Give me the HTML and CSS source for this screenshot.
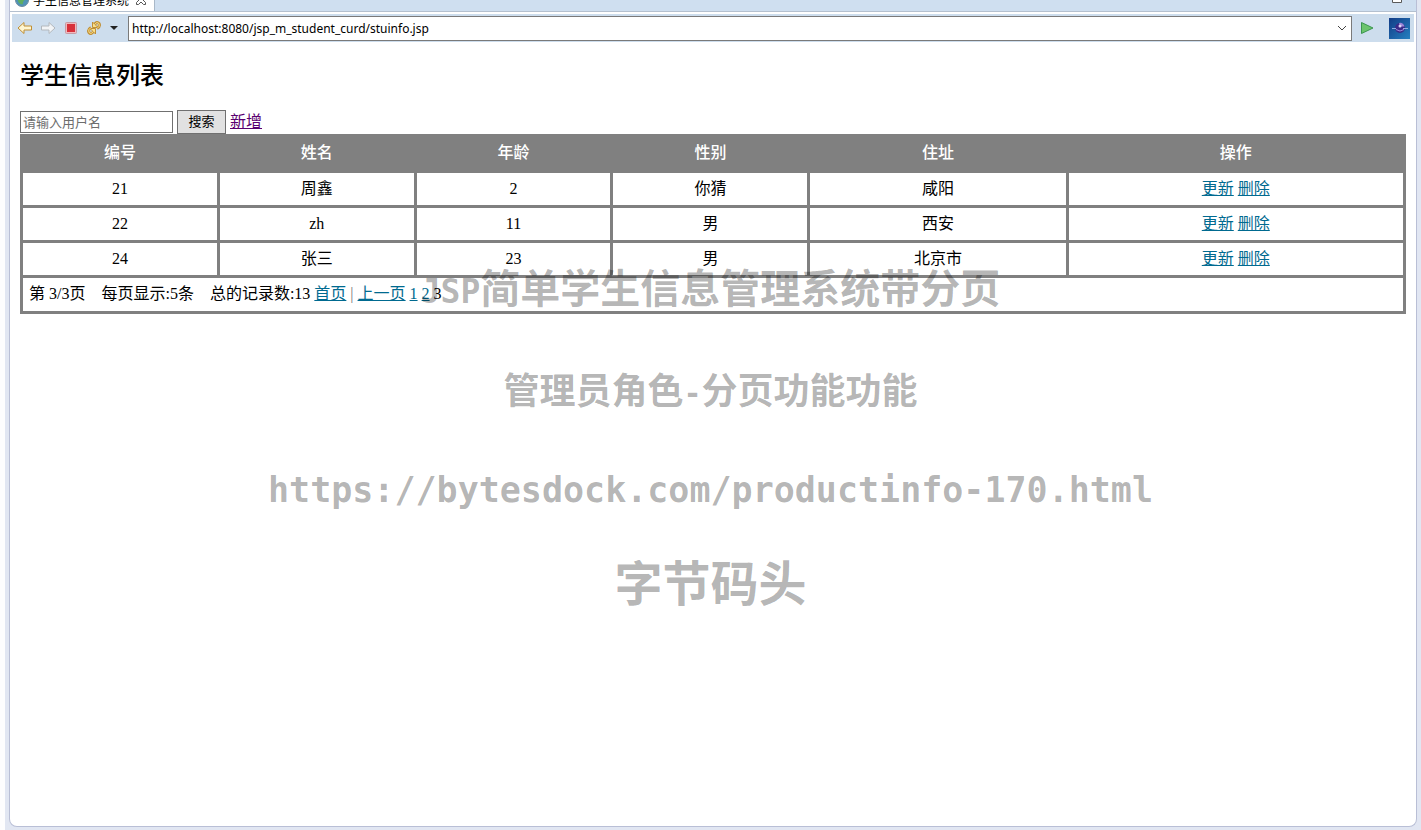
FILE: index.html
```
<!DOCTYPE html>
<html lang="zh-CN">
<head>
  <meta charset="UTF-8">
  <meta name="viewport" content="width=device-width, initial-scale=1.0">
  <title>学生信息管理系统</title>
  <link rel="stylesheet" href="styles.css">
</head>
<body>
  <div class="browser">
    <!-- Tab strip -->
    <div class="tab-strip">
      <div class="tab">
        <svg class="tab-globe" width="14" height="14" viewBox="0 0 14 14">
          <circle cx="7" cy="7" r="6.500" fill="#4f93b5" stroke="#6d8aa0"/>
          <path d="M3 5c3-3 6-2 7 0s-3 3-2 6c-3 1-6-2-5-6z" fill="#5fae62"/>
        </svg>
        <span>学生信息管理系统</span>
        <svg class="tab-close" width="12" height="12" viewBox="0 0 12 12">
          <path d="M1.500 1.500h2L6 4l2.500-2.500h2v2L8 6l2.500 2.500v2h-2L6 8l-2.500 2.500h-2v-2L4 6 1.500 3.500z" fill="#fff" stroke="#555"/>
        </svg>
      </div>
      <svg class="maximize" width="12" height="12" viewBox="0 0 12 12">
        <path d="M1.500 1.500h9v9h-9zM1.500 3.500h9" fill="#fff" stroke="#5a5a5a"/>
      </svg>
    </div>

    <!-- Address bar -->
    <form class="toolbar">
      <button type="button" class="tool" aria-label="后退">
        <svg width="16" height="16" viewBox="0 0 16 16">
          <path d="M1 8 7 2.500v3.500h7.500v4H7v3.500z" fill="#fff6d0" stroke="#c08f35" stroke-linejoin="round"/>
        </svg>
      </button>
      <button type="button" class="tool" aria-label="前进">
        <svg width="16" height="16" viewBox="0 0 16 16">
          <path d="M15 8 9 2.500v3.500H1.500v4H9v3.500z" fill="#f2f4f6" stroke="#b3b8bd" stroke-linejoin="round"/>
        </svg>
      </button>
      <button type="button" class="tool" aria-label="停止">
        <svg width="16" height="16" viewBox="0 0 16 16">
          <rect x="2.500" y="2.500" width="11" height="11" rx="1" fill="#f0b8bc" stroke="#c79aa4"/>
          <rect x="4" y="4" width="8" height="8" fill="#d8303a"/>
        </svg>
      </button>
      <button type="button" class="tool" aria-label="刷新">
        <svg width="16" height="16" viewBox="0 0 16 16">
          <g fill="none" stroke="#c08f35" stroke-width="3">
            <path d="M8.500 4.500Q11 1 13 3.500Q14.500 6.500 11 8.500"/>
            <path d="M7.500 11.500Q5 15 3 12.500Q1.500 9.500 5 7.500"/>
          </g>
          <path d="M6.500 2v5.500h5.500z" fill="#fbe08a" stroke="#c08f35" stroke-linejoin="round"/>
          <path d="M9.500 14V8.500H4z" fill="#fbe08a" stroke="#c08f35" stroke-linejoin="round"/>
          <g fill="none" stroke="#fbe08a">
            <path d="M8.500 4.500Q11 1 13 3.500Q14.500 6.500 11 8.500"/>
            <path d="M7.500 11.500Q5 15 3 12.500Q1.500 9.500 5 7.500"/>
          </g>
        </svg>
      </button>
      <button type="button" class="tool tool-menu" aria-label="更多">
        <svg width="8" height="4" viewBox="0 0 8 4"><path d="M0 0h8L4 4z" fill="#222"/></svg>
      </button>
      <div class="address">
        <input type="text" class="address-input" aria-label="地址" value="http://localhost:8080/jsp_m_student_curd/stuinfo.jsp">
        <svg width="10" height="6" viewBox="0 0 10 6"><path d="M1 1l4 4 4-4" fill="none" stroke="#444"/></svg>
      </div>
      <button type="button" class="tool go" aria-label="转到">
        <svg width="16" height="16" viewBox="0 0 16 16">
          <path d="M2.500 2.500 14 8 2.500 13.500z" fill="#6cc46c" stroke="#3b9650" stroke-linejoin="round"/>
        </svg>
      </button>
      <svg class="logo" width="21" height="21" viewBox="0 0 21 21">
        <defs>
          <linearGradient id="logoBg" x1="0" y1="0" x2="1" y2="1">
            <stop offset="0" stop-color="#123c86"/>
            <stop offset="1" stop-color="#2580c0"/>
          </linearGradient>
        </defs>
        <rect width="21" height="21" fill="url(#logoBg)"/>
        <circle cx="11" cy="10" r="5" fill="#3a2a88"/>
        <path d="M10 5q4-1 5.500 3.500H11z" fill="#9a86d8"/>
        <circle cx="11" cy="8" r="1.500" fill="#e0d4f6"/>
        <path d="M3 10.500h4M14 10.500h5" stroke="#8fa8e0"/>
        <path d="M7 11.500q4 3 8 0" fill="none" stroke="#9a8ad8"/>
      </svg>
    </form>

    <!-- Page -->
    <main class="page">
      <h2>学生信息列表</h2>
      <form class="search">
        <input type="text" class="search-input" aria-label="用户名" placeholder="请输入用户名">
        <button type="button" class="search-button">搜索</button>
        <a href="#" class="add-link">新增</a>
      </form>

      <table class="students">
        <colgroup>
          <col span="4" class="col-small">
          <col class="col-address">
          <col class="col-action">
        </colgroup>
        <thead>
          <tr>
            <th>编号</th>
            <th>姓名</th>
            <th>年龄</th>
            <th>性别</th>
            <th>住址</th>
            <th>操作</th>
          </tr>
        </thead>
        <tbody>
          <tr>
            <td>21</td>
            <td>周鑫</td>
            <td>2</td>
            <td>你猜</td>
            <td>咸阳</td>
            <td><a href="#">更新</a> <a href="#">删除</a></td>
          </tr>
          <tr>
            <td>22</td>
            <td>zh</td>
            <td>11</td>
            <td>男</td>
            <td>西安</td>
            <td><a href="#">更新</a> <a href="#">删除</a></td>
          </tr>
          <tr>
            <td>24</td>
            <td>张三</td>
            <td>23</td>
            <td>男</td>
            <td>北京市</td>
            <td><a href="#">更新</a> <a href="#">删除</a></td>
          </tr>
        </tbody>
        <tfoot>
          <tr>
            <td colspan="6">第 3/3页 &nbsp;&nbsp; 每页显示:5条 &nbsp;&nbsp; 总的记录数:13 <a href="#">首页</a> <span class="divider">|</span> <a href="#">上一页</a> <a href="#">1</a> <a href="#">2</a> 3</td>
          </tr>
        </tfoot>
      </table>
    </main>
  </div>

  <!-- Watermark -->
  <div class="watermark">
    <p class="mark-title"><span>JSP</span>简单学生信息管理系统带分页</p>
    <p class="mark-role">管理员角色<span>-</span>分页功能功能</p>
    <p class="mark-url">https://bytesdock.com/productinfo-170.html</p>
    <p class="mark-name">字节码头</p>
  </div>
</body>
</html>
```
FILE: styles.css
```
* {
  box-sizing: border-box;
}

html {
  background-color: #fdfdfe;
}

body {
  margin: 0;
  padding: 0 4px 3px;
  min-height: 100vh;
  display: flex;
  position: relative;
  background-color: #e1e6f2;
  border-left: 5px solid #fdfdfe;
  font-family: "Liberation Serif", "Noto Sans CJK SC", serif;
  font-size: 16px;
  color: #000;
}

.browser {
  flex: 1;
  display: flex;
  flex-direction: column;
  background-color: #fff;
  border: 1px solid #b9bfd6;
  border-top: none;
  border-radius: 0 0 8px 8px;
}

/* tab strip */
.tab-strip {
  height: 12px;
  overflow: hidden;
  display: flex;
  align-items: flex-end;
  justify-content: space-between;
  background-color: #cfdff0;
  border-bottom: 1px solid #b4c0cf;
}

.tab {
  height: 22px;
  width: 145px;
  padding-left: 5px;
  display: flex;
  align-items: center;
  flex-shrink: 0;
  gap: 4px;
  background-color: #fff;
  border-right: 1px solid #a9b8c8;
  font-family: "Noto Sans", "Noto Sans CJK SC", sans-serif;
  font-size: 12px;
  white-space: nowrap;
}

.tab-close {
  margin-left: 2px;
}

.maximize {
  margin: 0 13px 7px 0;
}

/* address bar */
.toolbar {
  margin: 2px 2px 0;
  height: 28px;
  padding: 0 4px 0 1px;
  display: flex;
  align-items: center;
  background-color: #cddded;
}

.tool {
  width: 23px;
  height: 22px;
  padding: 0;
  display: flex;
  align-items: center;
  justify-content: center;
  flex-shrink: 0;
  background: none;
  border: none;
}

.tool-menu {
  width: 17px;
  margin-right: 6px;
}

.address {
  flex: 1;
  height: 25px;
  padding-right: 4px;
  display: flex;
  align-items: center;
  background-color: #fff;
  border: 1px solid #7a7a7a;
}

.address-input {
  flex: 1;
  padding: 0 3px;
  border: none;
  outline: none;
  background: none;
  font-family: "Noto Sans", sans-serif;
  font-size: 12px;
  color: #000;
}

.go {
  width: 30px;
}

.logo {
  margin-left: 7px;
}

/* page */
.page {
  padding: 17px 10px;
}

h2 {
  margin: 0 0 17px;
  font-size: 24px;
  line-height: 34px;
  font-weight: 500;
}

.search {
  height: 24px;
  display: flex;
  align-items: center;
  gap: 4px;
}

.search-input {
  width: 153px;
  height: 22px;
  padding: 0 2px;
  border: 1px solid #707070;
  font-family: "Liberation Sans", "Noto Sans CJK SC", sans-serif;
  font-size: 13px;
}

.search-input::placeholder {
  color: #6d6d6d;
}

.search-button {
  width: 49px;
  height: 24px;
  padding: 0;
  background-color: #e1e1e1;
  border: 1px solid #707070;
  font-family: "Liberation Sans", "Noto Sans CJK SC", sans-serif;
  font-size: 13px;
  line-height: 20px;
  color: #000;
}

a {
  color: #006a90;
}

.add-link {
  line-height: 22px;
  color: #5a0070;
}

.students {
  width: 100%;
  table-layout: fixed;
  border-collapse: separate;
  border-spacing: 3px;
  background-color: #808080;
}

.col-small {
  width: 14.2%;
}

.col-address {
  width: 18.7%;
}

.col-action {
  width: 24.5%;
}

.students th,
.students td {
  height: 32px;
  padding: 0 6px 1px;
  line-height: 24px;
  text-align: center;
}

.students th {
  height: 33px;
  color: #fff;
  font-weight: 500;
}

.students td {
  background-color: #fff;
}

.students tfoot td {
  height: 33px;
  text-align: left;
}

.divider {
  color: #777;
}

/* watermark */
.watermark {
  position: absolute;
  top: 261px;
  left: -5px;
  right: 0;
  text-align: center;
  font-family: "Noto Sans CJK SC", sans-serif;
  font-weight: bold;
  line-height: 50px;
  color: rgba(0, 0, 0, 0.3);
  pointer-events: none;
}

.watermark p {
  margin: 0;
  height: 50px;
  white-space: nowrap;
}

.watermark span,
.mark-url {
  font-family: "DejaVu Sans Mono", monospace;
}

.mark-title {
  font-size: 40px;
}

.mark-title span {
  font-size: 33px;
}

.watermark .mark-role {
  margin-top: 52px;
  font-size: 36px;
}

.mark-role span {
  font-size: 30px;
}

.watermark .mark-url {
  margin-top: 52px;
  font-size: 35px;
}

.watermark .mark-name {
  margin-top: 40px;
  font-size: 48px;
}
```
